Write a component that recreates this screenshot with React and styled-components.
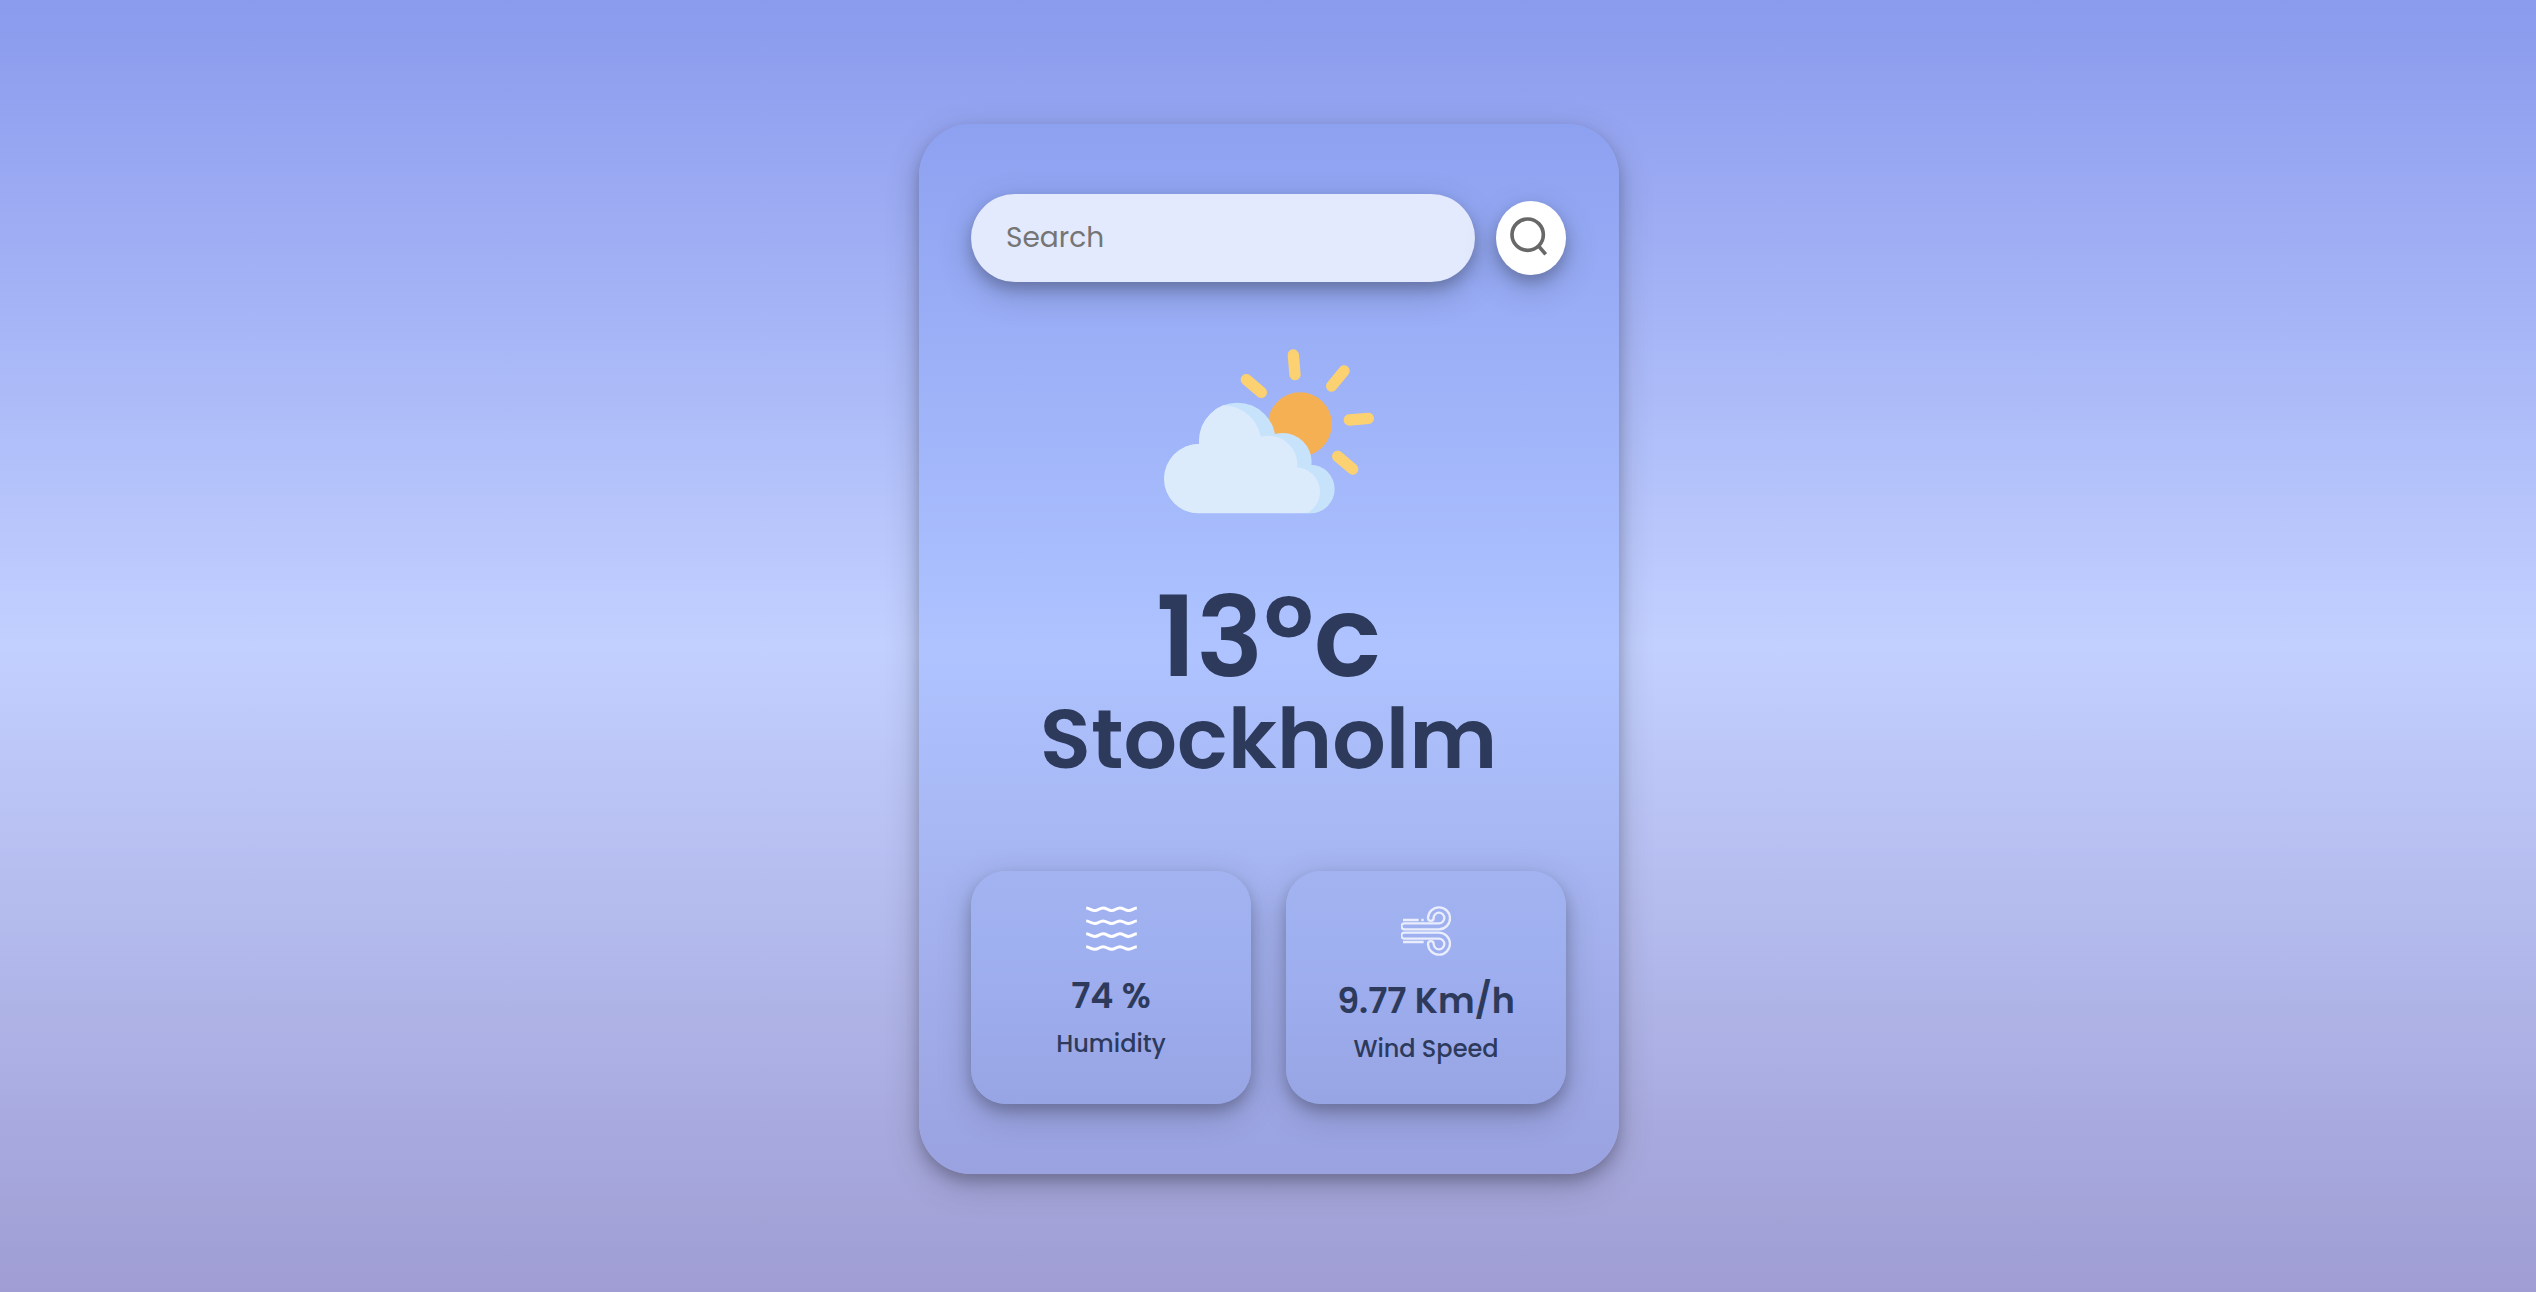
import React, { useState } from "react";
import styled, { createGlobalStyle } from "styled-components";

const ink = "#2d3a5b";
const lift = "0 7px 14px rgba(0, 0, 0, 0.2), 0 11px 35px rgba(0, 0, 0, 0.19)";

const GlobalStyle = createGlobalStyle`
  *, *::before, *::after { box-sizing: border-box; }
  body {
    margin: 0;
    font-family: Poppins, Inter, "Open Sans", sans-serif;
    color: ${ink};
  }
  h1, h2, p { margin: 0; }
`;

const Page = styled.main`
  min-height: 100vh;
  display: flex;
  justify-content: center;
  align-items: flex-start;
  padding: 124px 24px 118px 26px;
  background: linear-gradient(180deg, #8a9aed 0%, #c2d0ff 50%, #9f9dd3 100%);
`;

const Card = styled.section`
  width: 100%;
  max-width: 700px;
  padding: 70px 53px 70px 52px;
  display: flex;
  flex-direction: column;
  border-radius: 52px;
  background: linear-gradient(180deg, #8da1f1 0%, #aec3ff 50%, #9aa2e0 100%);
  box-shadow: ${lift};
`;

const SearchForm = styled.form`
  display: flex;
  align-items: center;
  gap: 21px;
`;

const SearchInput = styled.input`
  flex: 1;
  min-width: 0;
  height: 88px;
  padding: 0 35px;
  border: 0;
  outline: 0;
  border-radius: 44px;
  background: #e3eafd;
  color: ${ink};
  font: 400 28px/40px Poppins, Inter, "Open Sans", sans-serif;
  box-shadow: ${lift};
  &::placeholder {
    color: #757575;
    opacity: 1;
  }
`;

const SearchButton = styled.button`
  flex: none;
  width: 70px;
  height: 74px;
  padding: 0 5px 0 0;
  display: grid;
  place-items: center;
  border: 0;
  border-radius: 50%;
  background: #fff;
  cursor: pointer;
  box-shadow: ${lift};
`;

const Current = styled.div`
  display: flex;
  flex-direction: column;
  align-items: center;
  padding: 67px 0 88px;
  text-align: center;
`;

const Temperature = styled.h1`
  margin-top: 65px;
  font-size: 112px;
  line-height: 116px;
  font-weight: 600;
`;

const City = styled.h2`
  font-size: 84px;
  line-height: 88px;
  font-weight: 600;
`;

const Stats = styled.div`
  display: grid;
  grid-template-columns: 1fr 1fr;
  gap: 35px;
`;

const Stat = styled.article`
  display: flex;
  flex-direction: column;
  align-items: center;
  padding: 35px 16px 39px;
  border-radius: 35px;
  background: linear-gradient(180deg, #a3b3f1 0%, #9fb0f0 30%, #98a5e5 100%);
  box-shadow: ${lift};
`;

const StatValue = styled.p`
  margin-top: 25px;
  font-size: 35px;
  line-height: 40px;
  font-weight: 600;
`;

const StatLabel = styled.p`
  margin-top: 12px;
  font-size: 24px;
  line-height: 32px;
  font-weight: 500;
`;

function SearchIcon() {
  return (
    <svg width="37" height="42" viewBox="90 111 111 126" fill="none" stroke="#686868" strokeWidth="11" aria-hidden="true">
      <circle cx="143" cy="164" r="47" />
      <path d="M174 196L197 223" />
    </svg>
  );
}

function CloudShape() {
  return (
    <>
      <circle cx="176" cy="444" r="104" />
      <circle cx="292" cy="331" r="115" />
      <circle cx="428" cy="394" r="87" />
      <circle cx="511" cy="475" r="73" />
      <path d="M177 331H428V400H511V548H176Z" />
    </>
  );
}

function PartlyCloudy() {
  return (
    <svg width="210" height="165" viewBox="72 55 630 495" role="img" aria-label="Partly cloudy">
      <defs>
        <clipPath id="cloud">
          <CloudShape />
        </clipPath>
      </defs>
      <g stroke="#fbd171" strokeWidth="34" strokeLinecap="round">
        <path d="M460 73L465 132M612 121L575 166M628 268L685 263M593 377L638 415M319 147L364 185" />
      </g>
      <circle cx="480" cy="281" r="96" fill="#f6b054" />
      <g fill="#c7e3fc">
        <CloudShape />
      </g>
      <g fill="#dbebfc" clipPath="url(#cloud)">
        <circle cx="176" cy="444" r="104" />
        <circle cx="249" cy="339" r="115" />
        <circle cx="385" cy="402" r="87" />
        <circle cx="467" cy="483" r="73" />
        <path d="M170 339H385V409H467V560H170Z" />
      </g>
    </svg>
  );
}

const waveRows = [0, 39, 78, 117];

function WavesIcon() {
  return (
    <svg width="51" height="45" viewBox="405 167 153 136" fill="none" stroke="#fff" strokeWidth="9" aria-hidden="true">
      {waveRows.map((dy) => (
        <path
          key={dy}
          transform={`translate(0 ${dy})`}
          d="M405 173C416 174 420 181 431 181S445 173 456 173S471 181 482 181S496 173 507 173S522 181 533 181S547 174 558 173"
        />
      ))}
    </svg>
  );
}

function WindIcon() {
  const stream =
    "M403 220H507A16 16 0 1 0 491 204A8 8 0 0 1 474 204A33 33 0 1 1 507 238H403A9 9 0 0 1 403 220Z";
  return (
    <svg width="50" height="50" viewBox="393 168 150 150" fill="none" stroke="#e9edfc" strokeWidth="7" aria-hidden="true">
      <path d={stream} />
      <path d={stream} transform="matrix(1 0 0 -1 0 486)" />
      <path d="M399 210H446M454 210H461M399 276H461" />
    </svg>
  );
}

export default function App() {
  const [query, setQuery] = useState("");
  return (
    <>
      <GlobalStyle />
      <Page>
        <Card>
          <SearchForm onSubmit={(e) => e.preventDefault()}>
            <SearchInput
              type="text"
              placeholder="Search"
              aria-label="Search"
              value={query}
              onChange={(e) => setQuery(e.target.value)}
            />
            <SearchButton type="submit" aria-label="Search">
              <SearchIcon />
            </SearchButton>
          </SearchForm>
          <Current>
            <PartlyCloudy />
            <Temperature>13ºc</Temperature>
            <City>Stockholm</City>
          </Current>
          <Stats>
            <Stat>
              <WavesIcon />
              <StatValue>74 %</StatValue>
              <StatLabel>Humidity</StatLabel>
            </Stat>
            <Stat>
              <WindIcon />
              <StatValue>9.77 Km/h</StatValue>
              <StatLabel>Wind Speed</StatLabel>
            </Stat>
          </Stats>
        </Card>
      </Page>
    </>
  );
}
